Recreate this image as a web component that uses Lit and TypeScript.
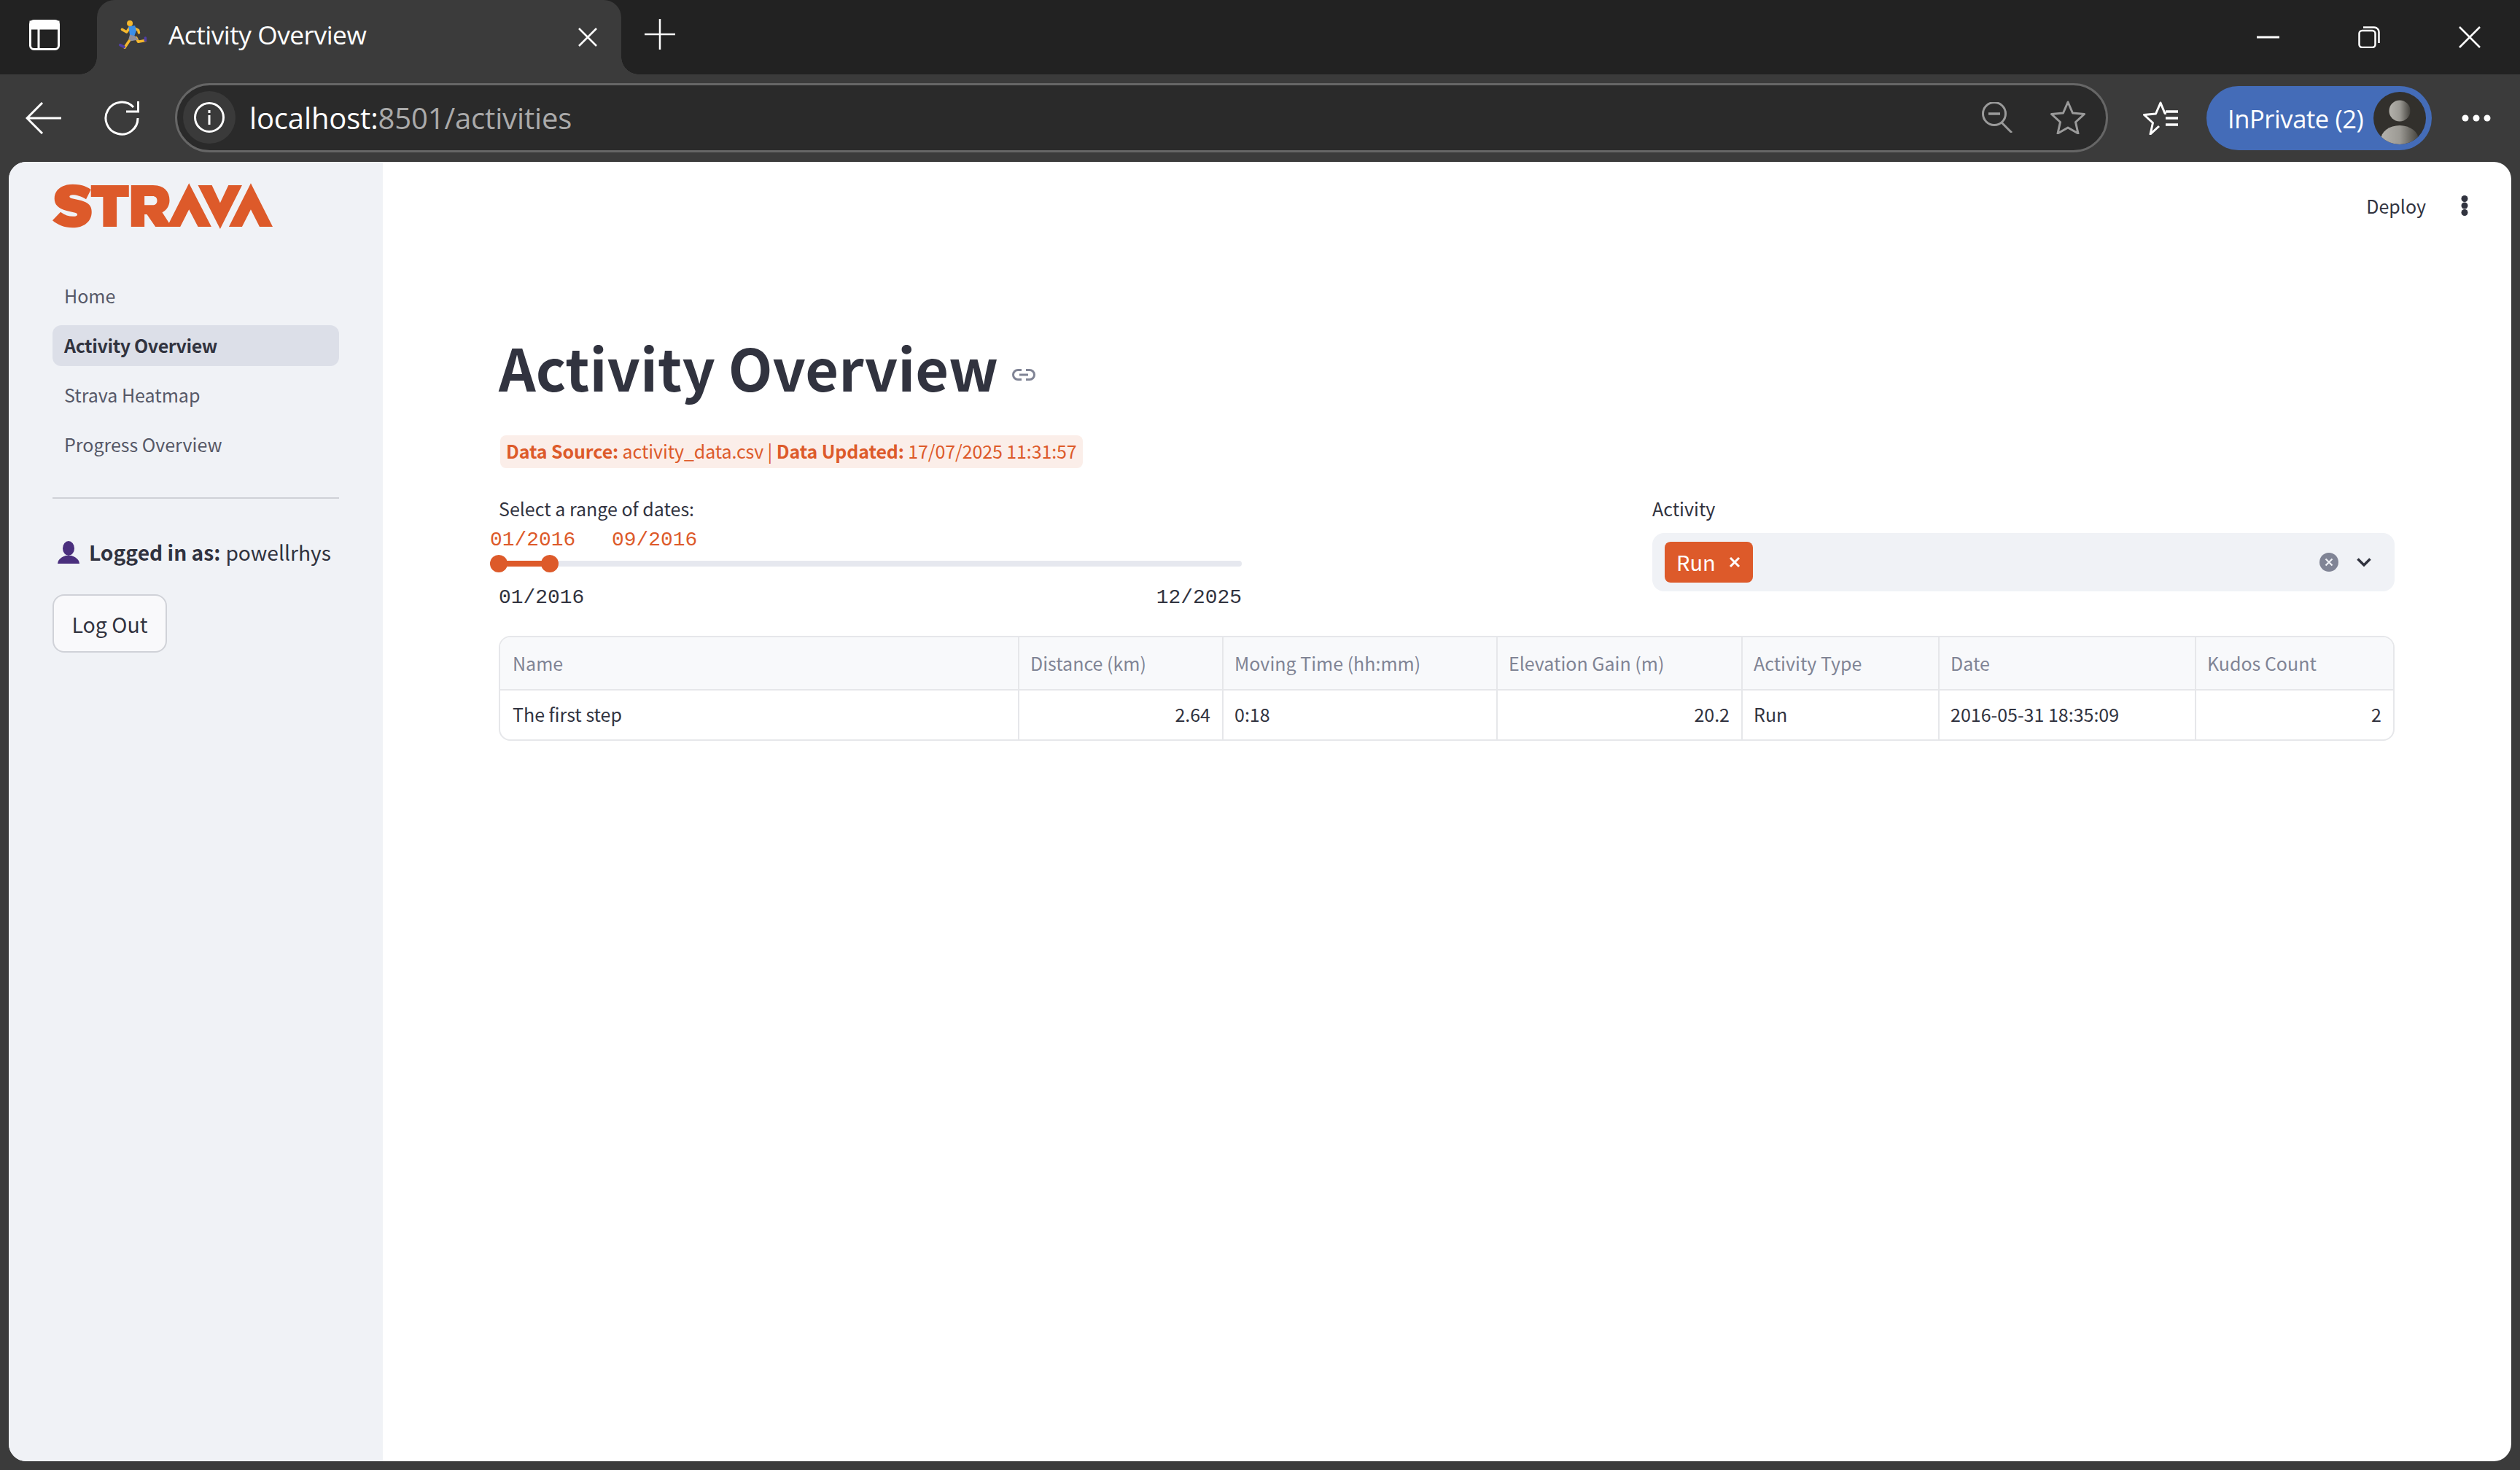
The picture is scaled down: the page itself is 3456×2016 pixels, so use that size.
import { LitElement, html, css, svg } from 'lit';
import { customElement } from 'lit/decorators.js';

const NAV = [
  { label: 'Home', active: false },
  { label: 'Activity Overview', active: true },
  { label: 'Strava Heatmap', active: false },
  { label: 'Progress Overview', active: false },
];

const COLUMNS = [
  { title: 'Name', value: 'The first step', width: 712, right: false },
  { title: 'Distance (km)', value: '2.64', width: 280, right: true },
  { title: 'Moving Time (hh:mm)', value: '0:18', width: 376, right: false },
  { title: 'Elevation Gain (m)', value: '20.2', width: 336, right: true },
  { title: 'Activity Type', value: 'Run', width: 270, right: false },
  { title: 'Date', value: '2016-05-31 18:35:09', width: 352, right: false },
  { title: 'Kudos Count', value: '2', width: 270, right: true },
];

const stravaLogo = svg`
  <path d="M67 215L100 180C120 195 140 200 160 198C172 196 172 186 160 183L125 175C90 166 75 150 75 125C75 90 105 66 150 66C180 66 205 73 225 88L205 128C185 115 165 110 150 110C135 110 132 120 145 124L185 133C215 142 228 155 228 180C228 220 195 245 150 245C115 245 88 233 67 215Z"/>
  <path d="M225 70H381V118H331V241H275V118H225Z"/>
  <path fill-rule="evenodd" d="M390 70H480C525 70 548 95 548 132C548 155 536 172 518 182L546 225L628 62L720 241H665L628 170L592 241H490L455 190H445V241H390ZM445 115V152H478C490 152 497 145 497 133C497 122 490 115 478 115Z"/>
  <path d="M665 70H722L756 143L790 70H846L756 250Z"/>
  <path d="M792 241L882 62L972 241H918L882 170L846 241Z"/>`;

@customElement('app-root')
export class AppRoot extends LitElement {
  static styles = css`
    :host {
      display: block;
      width: 3456px;
      height: 2016px;
      overflow: hidden;
      font-family: 'Noto Sans CJK SC', 'Source Sans Pro', sans-serif;
      color: #31333f;
    }

    svg {
      display: block;
      flex: none;
    }

    .window {
      height: 100%;
      display: flex;
      flex-direction: column;
      background: #3b3b3b;
    }

    /* browser chrome */
    .titlebar {
      height: 102px;
      flex: none;
      display: flex;
      align-items: center;
      background: #222222;
      font-family: 'Open Sans', sans-serif;
      color: #fff;
    }
    .panes {
      margin: -6px 0 0 40px;
    }
    .tab {
      position: relative;
      box-sizing: border-box;
      width: 719px;
      height: 102px;
      margin-left: 51px;
      padding: 0 33px 0 30px;
      display: flex;
      align-items: center;
      background: #3b3b3b;
      border-radius: 24px 24px 0 0;
    }
    .tab::before,
    .tab::after {
      content: '';
      position: absolute;
      bottom: 0;
      width: 24px;
      height: 24px;
      background: radial-gradient(circle at 0 0, transparent 23.5px, #3b3b3b 24px);
    }
    .tab::before {
      left: -24px;
    }
    .tab::after {
      right: -24px;
      transform: scaleX(-1);
    }
    .runner {
      margin-top: -8px;
    }
    .tab-title {
      margin: -9px 0 0 29px;
      flex: 1;
      font-size: 35.3px;
      letter-spacing: -0.5px;
      white-space: nowrap;
    }
    .new-tab {
      margin: -8px 0 0 32px;
    }
    .win-controls {
      margin-left: auto;
      display: flex;
      align-items: center;
      margin-right: 54px;
      gap: 108px;
    }
    .toolbar {
      height: 120px;
      flex: none;
      display: flex;
      align-items: center;
      font-family: 'Open Sans', sans-serif;
      color: #fff;
    }
    .back {
      margin-left: 35px;
    }
    .reload {
      margin-left: 59px;
    }
    .address {
      box-sizing: border-box;
      width: 2651px;
      height: 95px;
      margin-left: 49px;
      margin-top: -2px;
      padding: 0 28px 0 8px;
      display: flex;
      align-items: center;
      background: #2a2a2a;
      border: 3px solid #666666;
      border-radius: 48px;
    }
    .site-info {
      width: 72px;
      height: 72px;
      display: flex;
      align-items: center;
      justify-content: center;
      border-radius: 50%;
      background: #3a3a3a;
    }
    .url {
      margin-left: 19px;
      flex: 1;
      font-size: 40px;
      letter-spacing: -0.15px;
      color: #aaaaaa;
    }
    .url b {
      font-weight: 400;
      color: #fff;
    }
    .address-icons {
      display: flex;
      align-items: center;
      gap: 52px;
    }
    .favourites {
      margin-left: 48px;
    }
    .inprivate {
      box-sizing: border-box;
      width: 309px;
      height: 88px;
      margin-left: 39px;
      padding: 0 8px 0 29px;
      display: flex;
      align-items: center;
      justify-content: space-between;
      border-radius: 44px;
      background: #446cb8;
      font-size: 34.5px;
      letter-spacing: -0.4px;
      white-space: nowrap;
    }
    .more {
      margin-left: 41px;
    }

    /* page */
    .page {
      flex: 1;
      min-height: 0;
      margin: 0 12px 12px;
      display: flex;
      border-radius: 24px;
      overflow: hidden;
      background: #fff;
    }
    .sidebar {
      box-sizing: border-box;
      width: 513px;
      flex: none;
      padding: 27px 60px 0;
      background: #f0f2f6;
    }
    .logo {
      width: 302px;
      height: 66px;
      fill: #dd5a2a;
    }
    .nav {
      margin-top: 63px;
      display: flex;
      flex-direction: column;
      gap: 12px;
    }
    .nav-item {
      height: 56px;
      padding: 0 16px;
      border-radius: 12px;
      font-size: 25px;
      line-height: 54px;
      color: #565867;
    }
    .nav-item.active {
      background: #dcdfe8;
      color: #31333f;
      font-weight: 700;
      letter-spacing: -0.4px;
    }
    .divider {
      height: 2px;
      margin-top: 44px;
      background: #cfd1d7;
    }
    .user {
      margin-top: 53px;
      display: flex;
      align-items: center;
      font-size: 28.2px;
      line-height: 40px;
      white-space: nowrap;
    }
    .user svg {
      margin: 0 13px 0 7px;
    }
    .user b {
      font-weight: 700;
      margin-right: 7px;
    }
    .logout {
      box-sizing: border-box;
      width: 157px;
      height: 80px;
      margin-top: 38px;
      display: flex;
      align-items: center;
      justify-content: center;
      border: 2px solid #d0d2d8;
      border-radius: 16px;
      background: #f9f9fb;
      font-size: 28.5px;
    }

    .main {
      flex: 1;
      min-width: 0;
      box-sizing: border-box;
      padding: 0 160px 0 159px;
    }
    .header {
      height: 122px;
      margin-right: -160px;
      padding-right: 59px;
      display: flex;
      align-items: center;
      justify-content: flex-end;
      gap: 48px;
      font-size: 25px;
    }
    .deploy {
      margin-top: -3px;
    }
    .dots {
      margin-top: -2px;
    }
    .title-row {
      margin-top: 109px;
      height: 100px;
      display: flex;
      align-items: center;
    }
    h1 {
      margin: 0;
      font-size: 79px;
      line-height: 100px;
      font-weight: 700;
      white-space: nowrap;
    }
    .anchor {
      margin: 22px 0 0 19px;
    }
    .source {
      width: fit-content;
      height: 45px;
      margin: 44px 0 0 2px;
      padding: 0 8px;
      border-radius: 8px;
      background: #fbeee9;
      color: #dd5a2a;
      font-size: 25px;
      line-height: 43px;
      letter-spacing: -0.11px;
      white-space: nowrap;
    }
    .filters {
      margin-top: 36px;
      display: grid;
      grid-template-columns: 1019px 1018px;
      justify-content: space-between;
    }
    .field-label {
      height: 40px;
      font-size: 25px;
      line-height: 39px;
    }
    .slider {
      position: relative;
      height: 128px;
      font-family: 'Liberation Mono', monospace;
      font-size: 27.9px;
    }
    .track {
      position: absolute;
      top: 51px;
      left: -12px;
      right: 0;
      height: 8px;
      border-radius: 4px;
      background: #e6e8ef;
    }
    .range {
      position: absolute;
      top: 51px;
      height: 8px;
      background: #dd5a2a;
    }
    .thumb {
      position: absolute;
      top: 43px;
      width: 24px;
      height: 24px;
      margin-left: -12px;
      border-radius: 50%;
      background: #dd5a2a;
    }
    .value {
      position: absolute;
      top: 3px;
      line-height: 40px;
      color: #dd5a2a;
    }
    .ticks {
      position: absolute;
      top: 82px;
      left: 0;
      right: 0;
      display: flex;
      justify-content: space-between;
      line-height: 40px;
    }
    .select {
      box-sizing: border-box;
      height: 80px;
      margin-top: 13px;
      padding: 0 32px 0 17px;
      display: flex;
      align-items: center;
      border-radius: 16px;
      background: #f0f2f6;
    }
    .tag {
      box-sizing: border-box;
      width: 121px;
      height: 56px;
      padding: 0 17px 0 16px;
      display: flex;
      align-items: center;
      justify-content: space-between;
      border-radius: 8px;
      background: #dd5a2a;
      color: #fff;
      font-size: 29px;
    }
    .tag span {
      margin-top: -3px;
    }
    .clear {
      margin-left: auto;
    }
    .chevron {
      margin-left: 25px;
    }

    .table {
      box-sizing: border-box;
      width: 2600px;
      margin-top: 26px;
      display: grid;
      border: 2px solid #e6e7ea;
      border-radius: 16px;
      overflow: hidden;
      font-size: 25px;
    }
    .cell {
      box-sizing: border-box;
      padding: 0 16px 0 15px;
      border-right: 2px solid #e6e7ea;
      white-space: nowrap;
    }
    .cell:nth-child(7n) {
      border-right: none;
    }
    .cell:nth-child(7n + 1) {
      padding-left: 17px;
    }
    .cell.head {
      height: 73px;
      line-height: 70px;
      background: #f8f9fb;
      border-bottom: 2px solid #e6e7ea;
      color: #808495;
    }
    .cell.body {
      height: 67px;
      line-height: 64px;
    }
    .cell.right {
      text-align: right;
    }
  `;

  render() {
    return html`
      <div class="window">
        <div class="titlebar">
          <svg class="panes" width="42" height="42" viewBox="0 0 42 42" fill="none" stroke="#fff" stroke-width="3">
            <rect x="1.500" y="1.500" width="39" height="39" rx="5" />
            <path d="M2 3h38v9H2z" fill="#fff" />
            <path d="M13 12v28" />
          </svg>
          <div class="tab">
            <svg class="runner" width="39" height="41" viewBox="0 0 44 44" fill="none" stroke-linecap="round" stroke-linejoin="round">
              <path d="M5 14l7 4 5-7M22 11l8 4 1 4" stroke="#f5b82e" stroke-width="4" />
              <path d="M18 29l-3 4-6 9M27 27l3 6 11-2" stroke="#f5b82e" stroke-width="4" />
              <path d="M2 38l6 3M41 27v4" stroke="#4f3fa5" stroke-width="4" />
              <path d="M15 9l10-1 2 8-3 8-7-1z" fill="#3c8fe8" />
              <path d="M17 22l8 2 5 6-11 2-4-3z" fill="#8f8f9c" />
              <circle cx="17" cy="4.500" r="4.500" fill="#f5b82e" />
            </svg>
            <span class="tab-title">Activity Overview</span>
            <svg width="26" height="26" viewBox="0 0 26 26" stroke="#fff" stroke-width="2.500">
              <path d="M1 1l24 24M25 1L1 25" />
            </svg>
          </div>
          <svg class="new-tab" width="42" height="42" viewBox="0 0 42 42" stroke="#fff" stroke-width="2.500">
            <path d="M0 21h42M21 0v42" />
          </svg>
          <div class="win-controls">
            <svg width="31" height="4" viewBox="0 0 31 4"><path d="M0 2h31" stroke="#fff" stroke-width="3" /></svg>
            <svg width="30" height="30" viewBox="0 0 30 30" fill="none" stroke="#fff" stroke-width="2.500">
              <rect x="1.500" y="6" width="22" height="23" rx="4" />
              <path d="M7 1.500h15a6.500 6.500 0 0 1 6.500 6.500v15" />
            </svg>
            <svg width="30" height="30" viewBox="0 0 30 30" stroke="#fff" stroke-width="2.500">
              <path d="M1 1l28 28M29 1L1 29" />
            </svg>
          </div>
        </div>

        <div class="toolbar">
          <svg class="back" width="49" height="44" viewBox="0 0 49 44" fill="none" stroke="#fff" stroke-width="3">
            <path d="M49 22H2M23 1L2 22l21 21" />
          </svg>
          <svg class="reload" width="48" height="48" viewBox="0 0 48 48" fill="none" stroke="#fff" stroke-width="3">
            <path d="M40 9A22 22 0 1 0 46 24" />
            <path d="M46.500 1v14H30" />
          </svg>
          <div class="address">
            <div class="site-info">
              <svg width="42" height="42" viewBox="0 0 42 42" fill="none" stroke="#fff" stroke-width="3">
                <circle cx="21" cy="21" r="19.500" />
                <path d="M21 18v13M21 11v4" />
              </svg>
            </div>
            <span class="url"><b>localhost:</b>8501/activities</span>
            <div class="address-icons">
              <svg width="42" height="42" viewBox="0 0 42 42" fill="none" stroke="#9a9a9a" stroke-width="3">
                <circle cx="17" cy="16" r="15.500" />
                <path d="M9 16h16" stroke-width="3.500" />
                <path d="M27 28l14 14" />
              </svg>
              <svg width="48" height="46" viewBox="0 0 48 46" fill="none" stroke="#9a9a9a" stroke-width="3" stroke-linejoin="round">
                <path d="M24 2l6.500 15 16 1.500-12 11 3.500 15.500-14-8-14 8 3.500-15.500-12-11 16-1.500z" />
              </svg>
            </div>
          </div>
          <svg class="favourites" width="48" height="46" viewBox="0 0 48 46" fill="none" stroke="#fff" stroke-width="3" stroke-linejoin="round">
            <path d="M22 34L10 45l3.500-15.500L1.500 18.500l16-1.500L24 2l6 14.500h2" />
            <path d="M31 23h17M31 32h17M31 14h17" stroke-width="3.500" />
          </svg>
          <div class="inprivate">
            <span>InPrivate (2)</span>
            <svg width="72" height="72" viewBox="0 0 72 72">
              <defs>
                <linearGradient id="ghost">
                  <stop offset="0" stop-color="#b4b2ac" />
                  <stop offset="0.500" stop-color="#9c9a94" />
                  <stop offset="1" stop-color="#45433e" />
                </linearGradient>
                <clipPath id="disc"><circle cx="36" cy="36" r="36" /></clipPath>
              </defs>
              <circle cx="36" cy="36" r="36" fill="#32302c" />
              <g clip-path="url(#disc)" fill="url(#ghost)">
                <circle cx="36" cy="26" r="14.500" />
                <ellipse cx="36" cy="66" rx="26" ry="20" />
              </g>
            </svg>
          </div>
          <svg class="more" width="40" height="10" viewBox="0 0 40 10" fill="#fff">
            <circle cx="5" cy="5" r="4.500" /><circle cx="20" cy="5" r="4.500" /><circle cx="35" cy="5" r="4.500" />
          </svg>
        </div>

        <div class="page">
          <aside class="sidebar">
            <svg class="logo" viewBox="67 55 905 198" preserveAspectRatio="none">${stravaLogo}</svg>
            <nav class="nav">
              ${NAV.map(n => html`<div class="nav-item ${n.active ? 'active' : ''}">${n.label}</div>`)}
            </nav>
            <div class="divider"></div>
            <div class="user">
              <svg width="30" height="31" viewBox="0 0 30 31" fill="#4a2f7d">
                <ellipse cx="15" cy="10" rx="8" ry="10" />
                <path d="M0 31c1-7 6-9 11-11h8c5 2 10 4 11 11z" />
              </svg>
              <b>Logged in as:</b> powellrhys
            </div>
            <div class="logout">Log Out</div>
          </aside>

          <main class="main">
            <div class="header">
              <span class="deploy">Deploy</span>
              <svg class="dots" width="10" height="28" viewBox="0 0 10 28" fill="#31333f">
                <circle cx="5" cy="4.500" r="4.500" /><circle cx="5" cy="14" r="4.500" /><circle cx="5" cy="23.500" r="4.500" />
              </svg>
            </div>
            <div class="title-row">
              <h1>Activity Overview</h1>
              <svg class="anchor" width="32" height="16" viewBox="0 0 32 16" fill="none" stroke="#808495" stroke-width="3">
                <path d="M13 1.500H8a6.500 6.500 0 0 0 0 13h5M19 1.500h5a6.500 6.500 0 0 1 0 13h-5M10 8h12" />
              </svg>
            </div>
            <div class="source"><b>Data Source:</b> activity_data.csv | <b>Data Updated:</b> 17/07/2025 11:31:57</div>
            <div class="filters">
              <div>
                <div class="field-label">Select a range of dates:</div>
                <div class="slider">
                  <span class="value" style="left:-12px">01/2016</span>
                  <span class="value" style="left:155px">09/2016</span>
                  <div class="track"></div>
                  <div class="range" style="left:0;width:70px"></div>
                  <div class="thumb" style="left:0"></div>
                  <div class="thumb" style="left:70px"></div>
                  <div class="ticks"><span>01/2016</span><span>12/2025</span></div>
                </div>
              </div>
              <div>
                <div class="field-label">Activity</div>
                <div class="select">
                  <div class="tag">
                    <span>Run</span>
                    <svg width="16" height="16" viewBox="0 0 16 16" stroke="#fff" stroke-width="3"><path d="M2 2l12 12M14 2L2 14" /></svg>
                  </div>
                  <svg class="clear" width="26" height="26" viewBox="0 0 26 26">
                    <circle cx="13" cy="13" r="13" fill="#808495" />
                    <path d="M8.500 8.500l9 9M17.500 8.500l-9 9" stroke="#f0f2f6" stroke-width="2.200" />
                  </svg>
                  <svg class="chevron" width="20" height="12" viewBox="0 0 20 12" fill="none" stroke="#31333f" stroke-width="3.500">
                    <path d="M1.500 1.500L10 10l8.500-8.500" />
                  </svg>
                </div>
              </div>
            </div>
            <div class="table" style="grid-template-columns:${COLUMNS.map(c => `${c.width}px`).join(' ')}">
              ${COLUMNS.map(c => html`<div class="cell head">${c.title}</div>`)}
              ${COLUMNS.map(c => html`<div class="cell body ${c.right ? 'right' : ''}">${c.value}</div>`)}
            </div>
          </main>
        </div>
      </div>
    `;
  }
}
